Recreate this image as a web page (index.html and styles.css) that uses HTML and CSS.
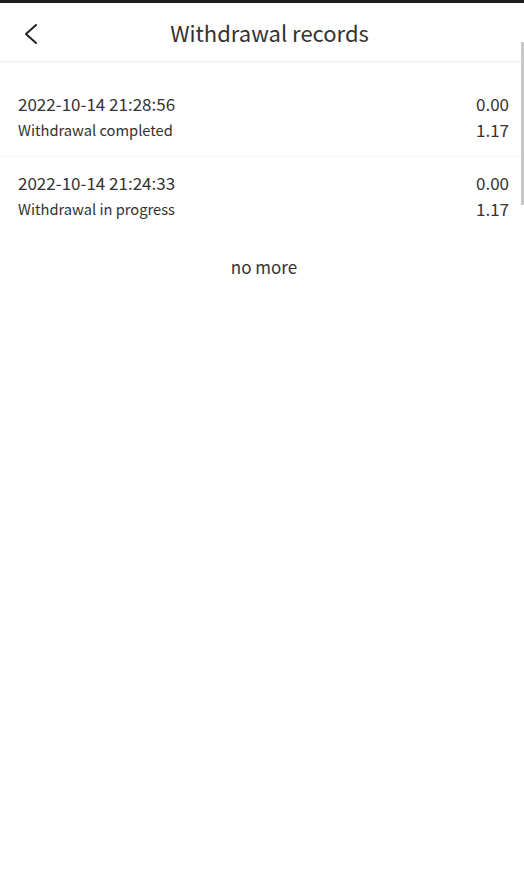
FILE: index.html
```html
<!DOCTYPE html>
<html>
<head>
<meta charset="utf-8">
<link rel="stylesheet" href="styles.css">
</head>
<body>
<div class="statusbar"></div>
<header class="header">
  <span class="back">
    <svg width="16" height="22" viewBox="0 0 16 22"><path d="M13 2 L3 11 L13 20" fill="none" stroke="#222" stroke-width="2" stroke-linecap="round" stroke-linejoin="round"/></svg>
  </span>
  <h1 class="title">Withdrawal records</h1>
</header>
<main class="list">
  <div class="record">
    <div class="left">
      <div class="date">2022-10-14 21:28:56</div>
      <div class="status">Withdrawal completed</div>
    </div>
    <div class="right">
      <div class="amount">0.00</div>
      <div class="amount">1.17</div>
    </div>
  </div>
  <div class="record">
    <div class="left">
      <div class="date">2022-10-14 21:24:33</div>
      <div class="status">Withdrawal in progress</div>
    </div>
    <div class="right">
      <div class="amount">0.00</div>
      <div class="amount">1.17</div>
    </div>
  </div>
  <div class="nomore">no more</div>
</main>
<div class="scrollbar"></div>
</body>
</html>
```
FILE: styles.css
```css
html, body {
  margin: 0;
  padding: 0;
  background: #fff;
  font-family: "Noto Sans CJK SC", "Noto Sans", sans-serif;
  color: #333;
}
body {
  width: 524px;
  height: 884px;
  position: relative;
  overflow: hidden;
}
.statusbar {
  height: 3px;
  background: #1c1c1c;
}
.header {
  height: 58px;
  display: flex;
  align-items: center;
  justify-content: center;
  position: relative;
  border-bottom: 1px solid #efefef;
  box-shadow: 0 1px 2px rgba(0,0,0,0.03);
}
.back {
  position: absolute;
  left: 23px;
  top: 20px;
  display: flex;
}
.title {
  margin: 0 0 0 15px;
  font-size: 22px;
  font-weight: 400;
  color: #333;
  line-height: 30px;
}
.list {
  margin-top: 16px;
}
.record {
  display: flex;
  justify-content: space-between;
  padding: 13px 15px 13px 18px;
}
.record + .record {
  border-top: 1px solid #f6f6f6;
}
.date {
  font-size: 17px;
  line-height: 26px;
  color: #333;
}
.status {
  font-size: 14.7px;
  line-height: 26px;
  color: #333;
}
.right {
  text-align: right;
}
.amount {
  font-size: 17px;
  line-height: 26px;
  color: #333;
}
.nomore {
  margin-top: 19px;
  padding-left: 4px;
  text-align: center;
  font-size: 17px;
  line-height: 26px;
  color: #333;
}
.scrollbar {
  position: absolute;
  right: 0;
  top: 42px;
  width: 3px;
  height: 163px;
  background: #c8c8c8;
}
```
